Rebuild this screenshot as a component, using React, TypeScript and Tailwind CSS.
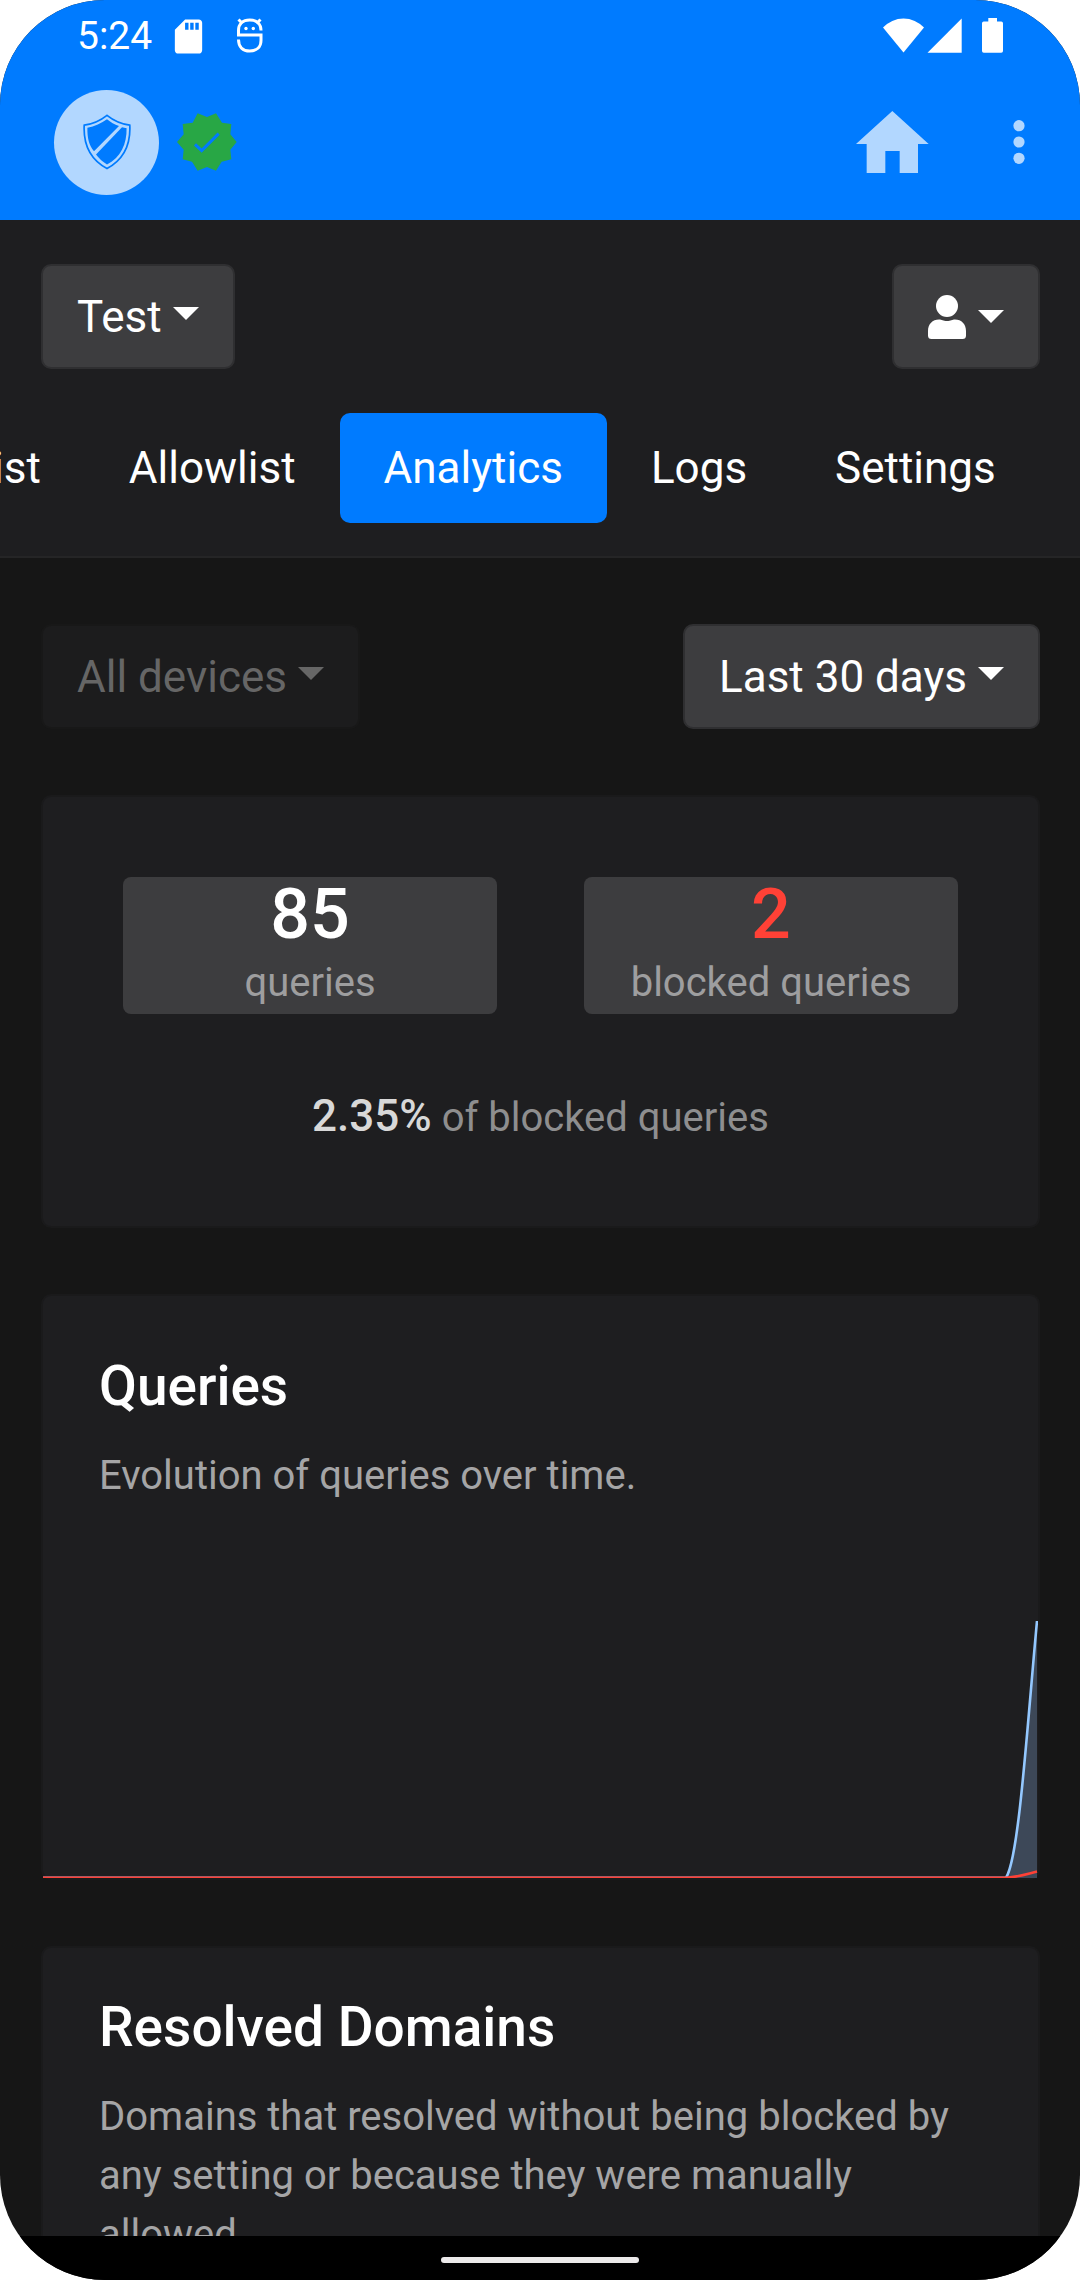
import { useLayoutEffect, useRef, useState } from "react";
import type { ReactNode } from "react";
import { MdSdCard } from "react-icons/md";
import clsx from "clsx";

const TABS = ["Denylist", "Allowlist", "Analytics", "Logs", "Settings"];

function Caret({ className }: { className?: string }) {
  return (
    <svg className={clsx("h-[13px] w-[26px] shrink-0", className)} viewBox="0 0 26 13" fill="currentColor" aria-hidden="true">
      <path d="M0 0h26L13 13z" />
    </svg>
  );
}

function Dropdown({ label, options, disabled }: { label: string; options: string[]; disabled?: boolean }) {
  return (
    <div className={clsx("relative", disabled && "text-[#666666]")}>
      <select
        aria-label={label}
        disabled={disabled}
        className={clsx(
          "block h-[105px] appearance-none rounded-[10px] border-2 pr-[71px] pl-[34px] text-[44px] leading-[60px]",
          disabled ? "border-[#181818] bg-[#1c1c1d] opacity-100" : "border-[#2f2f31] bg-[#3d3d3f]"
        )}
      >
        {options.map((option) => (
          <option key={option}>{option}</option>
        ))}
      </select>
      <Caret className="pointer-events-none absolute top-[43px] right-[36px]" />
    </div>
  );
}

function StatusBar() {
  return (
    <div className="flex h-[72px] items-center justify-between px-[77px]">
      <div className="flex items-center">
        <span className="text-[39px] leading-[72px]">5:24</span>
        <MdSdCard className="ml-4 size-[41px]" />
        <svg className="ml-[27px] h-[36px] w-[28px]" viewBox="0 0 28 36" fill="none" stroke="currentColor" strokeWidth="3" aria-hidden="true">
          <path d="M25 12.500C25 6 20.500 2 13.700 2S2.500 6 2.500 12.500V17H25V22.500C25 29 20.500 33 13.700 33S2.500 29 2.500 21.500" />
          <path d="M2.500 1.500l4 4M24.500 1.500l-4 4" />
          <circle cx="10" cy="10.500" r="1.700" fill="currentColor" stroke="none" />
          <circle cx="17.300" cy="10.500" r="1.700" fill="currentColor" stroke="none" />
        </svg>
      </div>
      <svg className="h-[36px] w-[120px]" viewBox="0 0 120 36" fill="currentColor" aria-hidden="true">
        <path d="M0 9.500A28 28 0 0 1 41 9.500L20.500 34.500z" />
        <path d="M44.500 34.700L78.700 .500V34.700z" />
        <path d="M105.300 0h8.700v3.500h4.200a1.800 1.800 0 0 1 1.800 1.800v27.600a1.800 1.800 0 0 1-1.800 1.800h-17.400a1.800 1.800 0 0 1-1.800-1.800V5.300a1.800 1.800 0 0 1 1.800-1.800h4.500z" />
      </svg>
    </div>
  );
}

function AppBar() {
  return (
    <div className="flex h-[140px] items-center justify-between pr-[55px] pl-[54px]">
      <div className="flex items-center gap-[18px]">
        <button aria-label="Protection" className="flex size-[105px] items-center justify-center rounded-full bg-[#b2d7ff] text-[#007bff]">
          <svg className="h-[56px] w-[48px]" viewBox="0 0 48 56" fill="none" aria-hidden="true">
            <path
              d="M24 1.300C17.500 6.500 9 10 1.200 11.200C.200 31 7.500 45.500 24 54.500C40.500 45.500 47.800 31 46.800 11.200C39 10 30.500 6.500 24 1.300z"
              stroke="currentColor"
              strokeWidth="1.700"
            />
            <path d="M24 5.200C18.500 9.300 11.500 12.300 4.400 13.800C4.200 24 6 31.500 11 37.300L36 12C31.500 10.500 27.500 8 24 5.200z" fill="currentColor" />
            <path d="M39 13.200L43.600 14.200C43.800 30 38 43 24 50.500C19.500 47.800 16 44.500 13 40.500z" fill="currentColor" />
          </svg>
        </button>
        <svg className="h-[58px] w-[60px]" viewBox="0 0 180 174" role="img" aria-label="Active">
          <path
            d="M62 1L90 12 117 1 135 29 163 33 160 64 179 87 160 110 163 139 134 146 117 173 90 162 62 173 45 146 17 139 20 110 0 87 20 64 17 33 47 29z"
            fill="#28a745"
          />
          <path d="M54 94l20 19 51-51" fill="none" stroke="#007bff" strokeWidth="9" />
        </svg>
      </div>
      <div className="flex items-center gap-[84px] text-[#b2d7ff]">
        <button aria-label="Home">
          <svg className="block h-[63px] w-[73px]" viewBox="0 0 219 189" fill="currentColor" aria-hidden="true">
            <path d="M109 0L218 99H186V186H131V120H88V186H32V99H0z" />
          </svg>
        </button>
        <button aria-label="More options">
          <svg className="block h-[44px] w-[12px]" viewBox="0 0 12 44" fill="currentColor" aria-hidden="true">
            <circle cx="6" cy="5.700" r="5.600" />
            <circle cx="6" cy="22" r="5.600" />
            <circle cx="6" cy="38.300" r="5.600" />
          </svg>
        </button>
      </div>
    </div>
  );
}

function Tabs() {
  const [active, setActive] = useState("Analytics");
  const scroller = useRef<HTMLElement>(null);

  // start scrolled to the last tabs
  useLayoutEffect(() => {
    if (scroller.current) scroller.current.scrollLeft = scroller.current.scrollWidth;
  }, []);

  return (
    <nav ref={scroller} className="mt-11 flex overflow-x-auto px-10 [scrollbar-width:none]">
      {TABS.map((tab) => (
        <a
          key={tab}
          href={`#${tab.toLowerCase()}`}
          onClick={() => setActive(tab)}
          className={clsx("shrink-0 rounded-[10px] px-11 text-[44px] leading-[110px]", tab === active && "bg-[#007bff]")}
        >
          {tab}
        </a>
      ))}
    </nav>
  );
}

function Stat({ value, label, danger }: { value: number; label: string; danger?: boolean }) {
  return (
    <div className="flex-1 rounded-[8px] bg-[#3d3d3f] text-center">
      <div className={clsx("text-[70px] leading-[75px] font-medium", danger && "text-[#ff4136]")}>{value}</div>
      <div className="text-[40px] leading-[62px] text-[#9e9e9f]">{label}</div>
    </div>
  );
}

function Card({ className, children }: { className?: string; children: ReactNode }) {
  return <section className={clsx("rounded-[10px] border-2 border-[#1a1a1b] bg-[#1e1e20]", className)}>{children}</section>;
}

function CardHeading({ title, children }: { title: string; children: ReactNode }) {
  return (
    <div className="px-14">
      <h2 className="text-[55px] leading-[66px] font-medium">{title}</h2>
      <p className="mt-[27px] text-[40px] leading-[59px] text-[#a5a5a6]">{children}</p>
    </div>
  );
}

function QueriesChart() {
  return (
    <svg className="mt-[113px] block h-[260px] w-full" viewBox="0 0 995 260" preserveAspectRatio="none" role="img" aria-label="Queries over time">
      <path d="M963 259C976 240 984 110 994 3V260H963z" fill="#3d4858" />
      <path d="M0 259.700H963C976 240 984 110 994 3" fill="none" stroke="#94c8ff" strokeWidth="2.600" />
      <path d="M0 259.700H963C976 259 984 256 994 253.500" fill="none" stroke="#ff4136" strokeWidth="2.600" />
    </svg>
  );
}

export default function App() {
  return (
    <div className="h-screen bg-white font-['Roboto',sans-serif] text-white">
      <div className="flex h-full flex-col overflow-hidden rounded-[105px] bg-[#161616]">
        <header className="shrink-0 bg-[#007bff] pb-2">
          <StatusBar />
          <AppBar />
        </header>

        <div className="min-h-0 flex-1 overflow-y-auto [scrollbar-width:none]">
          <div className="border-b-2 border-[#252526] bg-[#1e1e20] pt-11 pb-[33px]">
            <div className="flex justify-between pr-10 pl-[41px]">
              <Dropdown label="Configuration" options={["Test"]} />
              <button
                aria-label="Account"
                className="flex h-[105px] items-center gap-3 rounded-[10px] border-2 border-[#2f2f31] bg-[#3d3d3f] px-[34px]"
              >
                <svg className="h-[44px] w-[38px]" viewBox="0 0 38 44" fill="currentColor" aria-hidden="true">
                  <circle cx="19" cy="11" r="11" />
                  <path d="M0 36C0 29 4.500 24.500 11 24.500C14 24.500 15 26 19 26S24 24.500 27 24.500C33.500 24.500 38 29 38 36V40.500Q38 44 34.500 44H3.500Q0 44 0 40.500z" />
                </svg>
                <Caret />
              </button>
            </div>
            <Tabs />
          </div>

          <main className="flex flex-col gap-[66px] py-[66px] pr-10 pl-[41px]">
            <div className="flex justify-between">
              <Dropdown label="Device" options={["All devices"]} disabled />
              <Dropdown label="Period" options={["Last 30 days"]} />
            </div>

            <Card className="px-[80px] pt-[80px] pb-[74px]">
              <div className="flex gap-[87px]">
                <Stat value={85} label="queries" />
                <Stat value={2} label="blocked queries" danger />
              </div>
              <p className="mt-[68px] text-center text-[40px] leading-[68px] text-[#8e8e8f]">
                <span className="text-[44px] font-medium text-[#d8d8d8]">2.35%</span> of blocked queries
              </p>
            </Card>

            <Card className="pt-[57px]">
              <CardHeading title="Queries">Evolution of queries over time.</CardHeading>
              <QueriesChart />
            </Card>

            <Card className="pt-[46px] pb-[57px]">
              <CardHeading title="Resolved Domains">
                Domains that resolved without being blocked by any setting or because they were manually allowed.
              </CardHeading>
            </Card>
          </main>
        </div>

        <footer className="flex h-11 shrink-0 items-center justify-center bg-black pt-1">
          <div className="h-[6px] w-[198px] rounded-full bg-[#ebe9ea]" />
        </footer>
      </div>
    </div>
  );
}
